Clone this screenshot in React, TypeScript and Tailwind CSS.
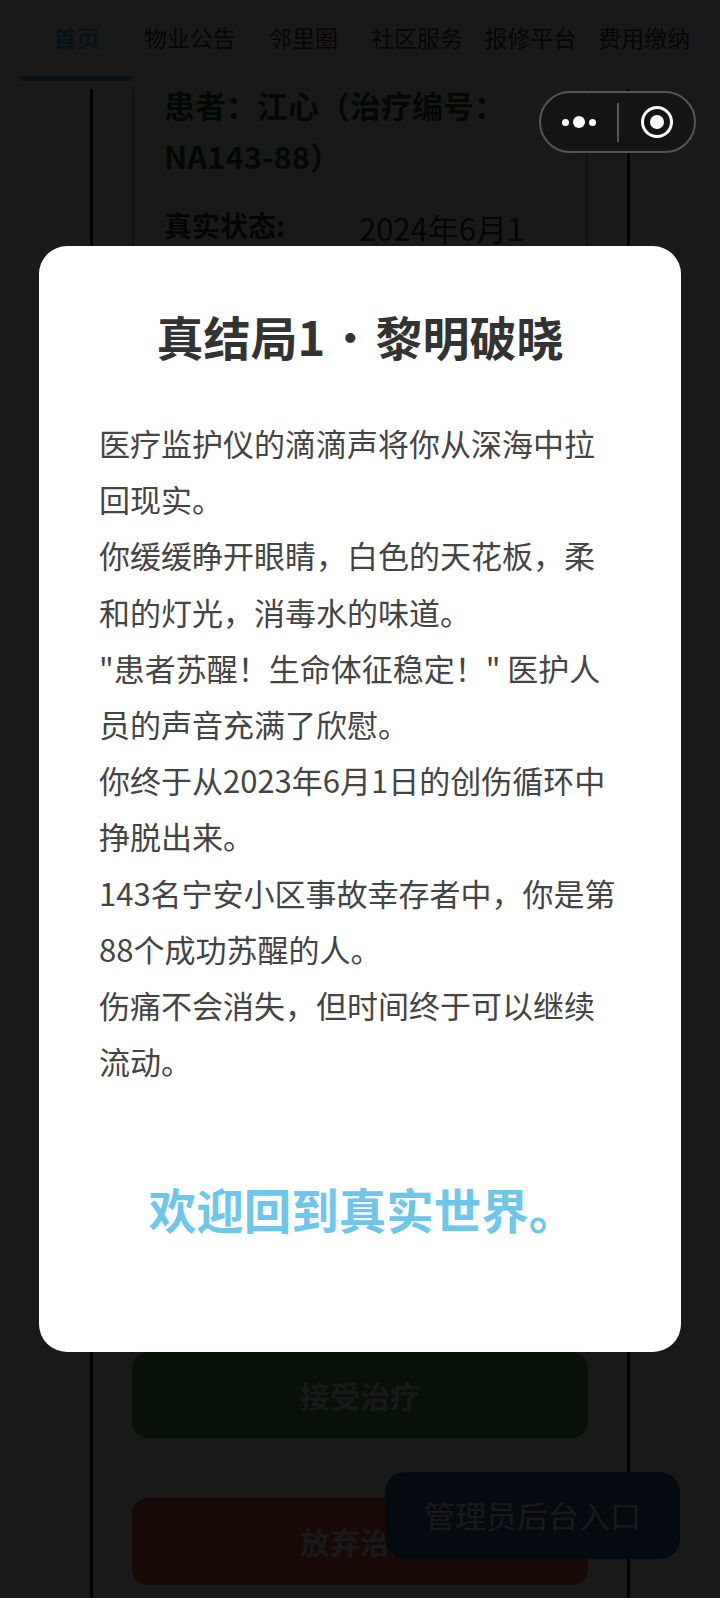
const font = { fontFamily: '"Noto Sans CJK SC", "Liberation Sans", sans-serif' };

const tabs = ["首页", "物业公告", "邻里圈", "社区服务", "报修平台", "费用缴纳"];

const lines = [
  "医疗监护仪的滴滴声将你从深海中拉",
  "回现实。",
  "你缓缓睁开眼睛，白色的天花板，柔",
  "和的灯光，消毒水的味道。",
  "\"患者苏醒！生命体征稳定！\" 医护人",
  "员的声音充满了欣慰。",
  "你终于从2023年6月1日的创伤循环中",
  "挣脱出来。",
  "143名宁安小区事故幸存者中，你是第",
  "88个成功苏醒的人。",
  "伤痛不会消失，但时间终于可以继续",
  "流动。",
];

export default function App() {
  return (
    <div style={font} className="relative h-[1598px] w-[720px] overflow-hidden bg-white">
      {/* tab bar */}
      <div className="flex h-[88px] items-start border-b border-[#eeeeee] pl-[20px]">
        {tabs.map((t, i) => (
          <div
            key={t}
            className={
              i === 0
                ? "flex h-[81px] w-[113px] shrink-0 justify-center border-b-[5px] border-[#4fc3f7] pt-[20px] text-[23px] leading-[34px] font-bold text-[#4fc3f7]"
                : "flex h-[81px] w-[113.6px] shrink-0 justify-center pt-[20px] text-[23px] leading-[34px] whitespace-nowrap text-[#444444]"
            }
          >
            {t}
          </div>
        ))}
      </div>

      {/* page behind the dialog */}
      <div className="mx-[20px] mt-[1px] h-[1509px] border-x border-[#f4f4f4] px-[69px]">
        <div className="h-full border-x-[3px] border-[#000022] px-[39px]">
          <div className="flex h-[1200px] flex-col border-x-2 border-[#bbbbbb] px-[30px]">
            <div className="-mt-[10px] text-[31px] leading-[51px] font-bold text-[#1b5e20]">
              患者：江心（治疗编号：NA143-88）
            </div>
            <div className="mt-[24px] flex items-start text-[#333333]">
              <span className="w-[195px] text-[28px] leading-[40px] font-semibold">真实状态:</span>
              <span className="mt-[3px] text-[31px] leading-[40px]">2024年6月1</span>
            </div>
          </div>
        </div>
      </div>

      {/* action buttons, under the dialog */}
      <div className="absolute top-[1352px] left-[132px] flex w-[456px] flex-col gap-[60px]">
        <div className="flex h-[86px] items-center justify-center rounded-[16px] bg-[#4caf50] text-[30px] font-bold text-white">
          接受治疗
        </div>
        <div className="flex h-[87px] items-center justify-center rounded-[16px] bg-[#f0623f] text-[30px] font-bold text-white">
          放弃治疗
        </div>
      </div>

      <div className="absolute top-[1472px] left-[385px] flex h-[87px] w-[295px] items-center justify-center rounded-[20px] bg-[#2a6a9a] text-[31px] text-white">
        管理员后台入口
      </div>

      {/* overlay + dialog */}
      <div className="absolute inset-0 bg-black/90" />
      <div className="absolute top-[246px] left-[39px] h-[1106px] w-[642px] rounded-[28px] bg-white px-[60px] pt-[57px] text-center">
        <h2 className="text-[47px] leading-[66px] font-bold [word-spacing:-9px] text-[#333333]">
          真结局1 <span className="font-normal">·</span> 黎明破晓
        </h2>
        <div className="mt-[46px] text-left text-[31px] leading-[56.2px] whitespace-nowrap text-[#444444]">
          {lines.map((l) => (
            <div key={l}>{l}</div>
          ))}
        </div>
        <div className="mt-[87px] pl-[5px] text-[47.5px] leading-[66px] font-bold whitespace-nowrap text-[#6ec6ea]">
          欢迎回到真实世界。
        </div>
      </div>

      {/* mini program capsule */}
      <div className="absolute top-[91px] left-[539px] flex h-[62px] w-[157px] items-center rounded-full border-2 border-[#555555] bg-[#141414]">
        <div className="flex w-[76px] items-center justify-center gap-[4px]">
          <span className="h-[7px] w-[7px] rounded-full bg-white" />
          <span className="h-[12px] w-[12px] rounded-full bg-white" />
          <span className="h-[7px] w-[7px] rounded-full bg-white" />
        </div>
        <div className="h-[39px] w-[2px] bg-[#555555]" />
        <div className="flex flex-1 items-center justify-center pl-[1px]">
          <div className="flex h-[32px] w-[32px] items-center justify-center rounded-full border-[3px] border-white">
            <span className="h-[14px] w-[14px] rounded-full bg-white" />
          </div>
        </div>
      </div>
    </div>
  );
}
